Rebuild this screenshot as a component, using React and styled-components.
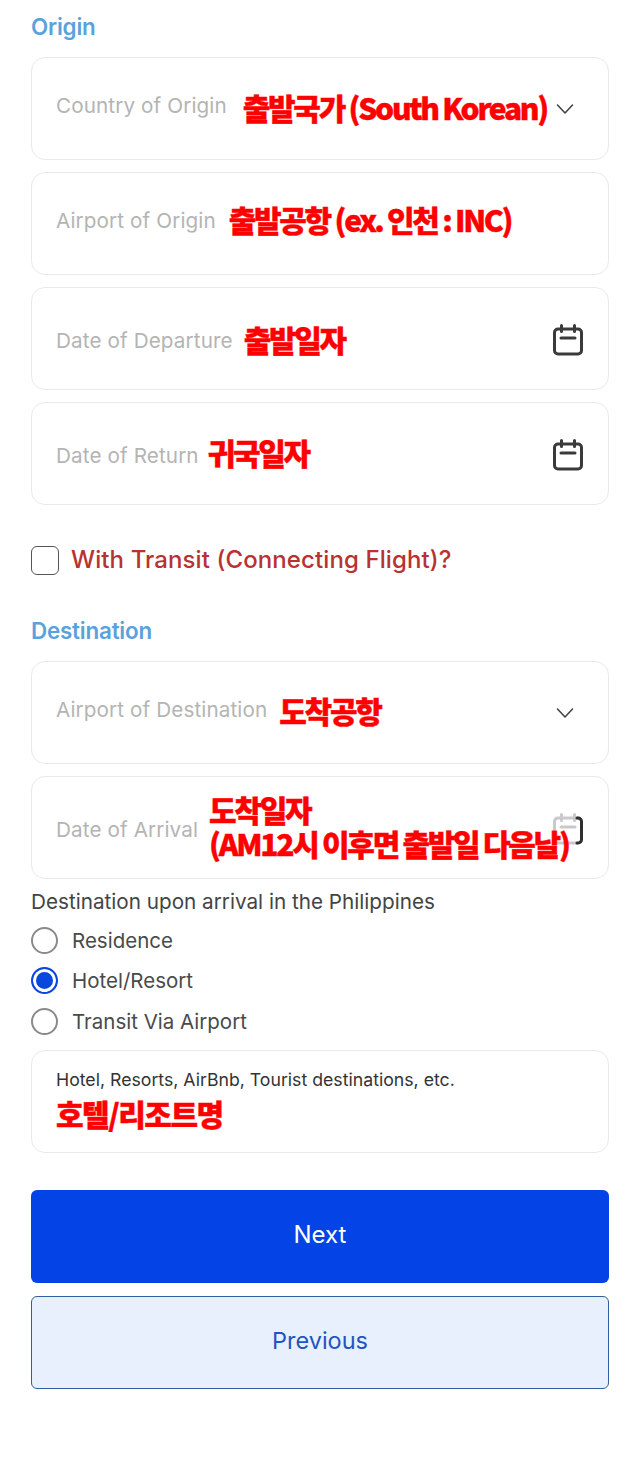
import styled, { createGlobalStyle } from "styled-components";

const GlobalStyle = createGlobalStyle`
  html, body {
    margin: 0;
    padding: 0;
    background: #ffffff;
  }
  * {
    box-sizing: border-box;
  }
`;

const Page = styled.div`
  width: 640px;
  height: 1457px;
  padding: 15px 31px 0;
  font-family: "Inter", "Noto Sans CJK KR", sans-serif;
  overflow: hidden;
`;

const SectionTitle = styled.div`
  height: 24px;
  line-height: 24px;
  font-size: 22.4px;
  font-weight: 600;
  letter-spacing: -0.2px;
  color: #5aa2dc;
  margin-bottom: 18px;
`;

const Fields = styled.div`
  display: flex;
  flex-direction: column;
  gap: 12px;
`;

const Field = styled.div`
  position: relative;
  height: 103px;
  padding: 0 24px;
  display: flex;
  align-items: center;
  background: #fff;
  border: 1.5px solid #e9e9e9;
  border-radius: 14px;
`;

const Placeholder = styled.span`
  flex: none;
  font-size: 20.7px;
  font-weight: 400;
  letter-spacing: 0.1px;
  color: #b4b4b4;
  position: relative;
  top: ${(p) => (p.$low ? 2 : -3)}px;
`;

const Note = styled.span`
  flex: none;
  margin-left: ${(p) => p.$gap ?? 12}px;
  font-family: "Noto Sans CJK KR", sans-serif;
  font-size: 30px;
  line-height: 34px;
  font-weight: 900;
  letter-spacing: ${(p) => p.$tracking ?? -2.3}px;
  -webkit-text-stroke: 0.4px #ff0000;
  color: #ff0000;
  position: relative;
  z-index: 1;
  top: ${(p) => p.$top ?? -2}px;
  white-space: pre;
`;

const IconSlot = styled.span`
  position: absolute;
  right: ${(p) => p.$right}px;
  top: 50%;
  transform: translateY(calc(-50% + ${(p) => p.$shift ?? 0}px));
  display: flex;
`;

const CheckRow = styled.div`
  display: flex;
  align-items: center;
  gap: 12px;
  margin: 41px 0 44px;
`;

const CheckBox = styled.span`
  width: 28px;
  height: 29px;
  border: 1.5px solid #555;
  border-radius: 6px;
`;

const CheckLabel = styled.span`
  font-size: 24px;
  font-weight: 500;
  letter-spacing: 0.1px;
  color: #b83232;
  position: relative;
  top: -1px;
`;

const RadioLegend = styled.div`
  margin-top: 10px;
  font-size: 20.7px;
  line-height: 26px;
  color: #444;
`;

const RadioList = styled.div`
  display: flex;
  flex-direction: column;
  gap: 12.5px;
  margin: 11px 0 15px;
`;

const RadioRow = styled.div`
  display: flex;
  align-items: center;
  gap: 14px;
  height: 28px;
  font-size: 20.5px;
  color: #4a4a4a;
`;

const RadioDot = styled.span`
  width: 27px;
  height: 27px;
  border-radius: 50%;
  border: 2px solid ${(p) => (p.$on ? "#0a47e0" : "#8a8a8a")};
  background: ${(p) => (p.$on ? "#0a47e0" : "#fff")};
  box-shadow: ${(p) => (p.$on ? "inset 0 0 0 3px #fff" : "none")};
`;

const TextField = styled(Field)`
  flex-direction: column;
  align-items: flex-start;
  justify-content: flex-start;
  padding-top: 17px;
`;

const Hint = styled.span`
  font-size: 17.7px;
  line-height: 24px;
  color: #333;
`;

const Actions = styled.div`
  display: flex;
  flex-direction: column;
  gap: 13px;
  margin-top: 37px;
`;

const Button = styled.button`
  width: 100%;
  height: 93px;
  padding: 0 0 4px;
  border-radius: 6px;
  border: ${(p) => (p.$primary ? "0" : "1.5px solid #2f5f9e")};
  background: ${(p) => (p.$primary ? "#0444e6" : "#e9f0fd")};
  color: ${(p) => (p.$primary ? "#ffffff" : "#1f55c0")};
  font-family: inherit;
  font-size: ${(p) => (p.$primary ? 24 : 23.5)}px;
  font-weight: 400;
`;

const Chevron = () => (
  <svg width="18" height="11" viewBox="0 0 18 11" fill="none">
    <path d="M1.5 1.5L9 9.5l7.5-8" stroke="#444" strokeWidth="1.6" strokeLinecap="round" strokeLinejoin="round" />
  </svg>
);

const Calendar = ({ faded }) => (
  <svg width="32" height="32" viewBox="0 0 32 32" fill="none" stroke={faded ? "#c9c9c9" : "#3a3a3a"} strokeWidth="3" strokeLinecap="round">
    <rect x="2.5" y="5" width="27" height="25" rx="3.5" />
    <path d="M9.5 1.5v6M22.5 1.5v6M9 14h14" />
    {faded && <path d="M25 5h1a3.5 3.5 0 0 1 3.5 3.5v18A3.5 3.5 0 0 1 26 30h-1" stroke="#2f2f2f" />}
  </svg>
);

const App = () => {
  return (
    <Page>
      <GlobalStyle />
      <SectionTitle>Origin</SectionTitle>
      <Fields>
        <Field>
          <Placeholder>Country of Origin</Placeholder>
          <Note $gap={16}>출발국가 (South Korean)</Note>
          <IconSlot $right={34}><Chevron /></IconSlot>
        </Field>
        <Field>
          <Placeholder>Airport of Origin</Placeholder>
          <Note $gap={13} $top={-5}>출발공항 (ex. 인천 : INC)</Note>
        </Field>
        <Field>
          <Placeholder $low>Date of Departure</Placeholder>
          <Note $gap={11} $top={0}>출발일자</Note>
          <IconSlot $right={24} $shift={1}><Calendar /></IconSlot>
        </Field>
        <Field>
          <Placeholder $low>Date of Return</Placeholder>
          <Note $gap={9} $top={-2}>귀국일자</Note>
          <IconSlot $right={24} $shift={1}><Calendar /></IconSlot>
        </Field>
      </Fields>

      <CheckRow>
        <CheckBox />
        <CheckLabel>With Transit (Connecting Flight)?</CheckLabel>
      </CheckRow>

      <SectionTitle>Destination</SectionTitle>
      <Fields>
        <Field>
          <Placeholder>Airport of Destination</Placeholder>
          <Note $top={-3}>도착공항</Note>
          <IconSlot $right={34}><Chevron /></IconSlot>
        </Field>
        <Field>
          <Placeholder $low>Date of Arrival</Placeholder>
          <IconSlot $right={24} $shift={1}><Calendar faded /></IconSlot>
          <Note $gap={11}>{"도착일자\n(AM12시 이후면 출발일 다음날)"}</Note>
        </Field>
      </Fields>

      <RadioLegend>Destination upon arrival in the Philippines</RadioLegend>
      <RadioList>
        <RadioRow><RadioDot />Residence</RadioRow>
        <RadioRow><RadioDot $on />Hotel/Resort</RadioRow>
        <RadioRow><RadioDot />Transit Via Airport</RadioRow>
      </RadioList>

      <TextField>
        <Hint>Hotel, Resorts, AirBnb, Tourist destinations, etc.</Hint>
        <Note $gap={0} $top={4} $tracking={-1.5}>호텔/리조트명</Note>
      </TextField>

      <Actions>
        <Button $primary>Next</Button>
        <Button>Previous</Button>
      </Actions>
    </Page>
  );
};

export default App;
